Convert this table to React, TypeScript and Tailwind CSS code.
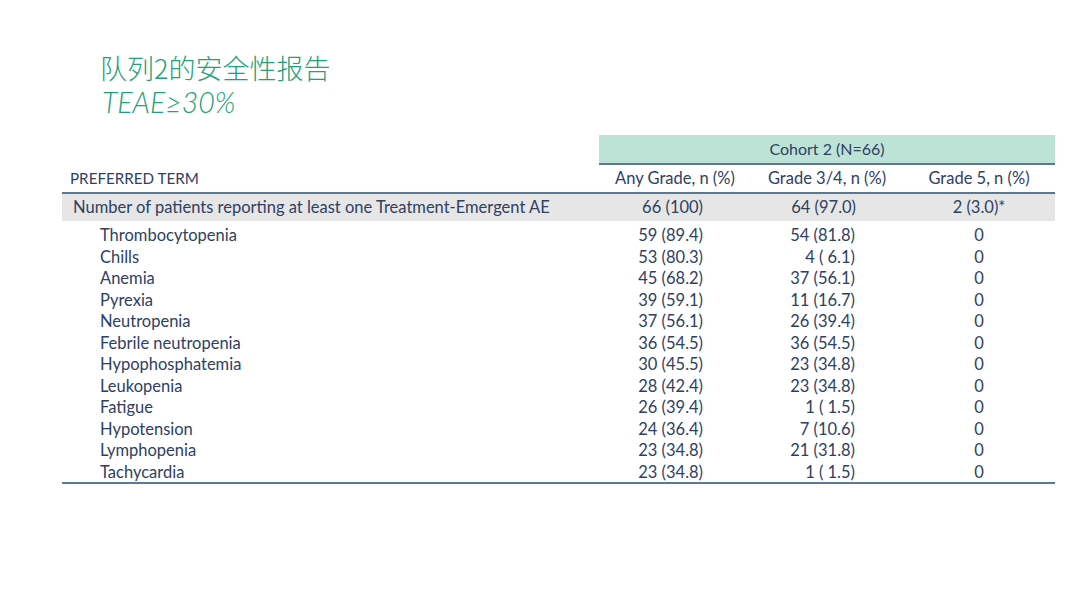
const rows: Array<[string, string, string, string]> = [
  ["Thrombocytopenia", "59 (89.4)", "54 (81.8)", "0"],
  ["Chills", "53 (80.3)", "4 ( 6.1)", "0"],
  ["Anemia", "45 (68.2)", "37 (56.1)", "0"],
  ["Pyrexia", "39 (59.1)", "11 (16.7)", "0"],
  ["Neutropenia", "37 (56.1)", "26 (39.4)", "0"],
  ["Febrile neutropenia", "36 (54.5)", "36 (54.5)", "0"],
  ["Hypophosphatemia", "30 (45.5)", "23 (34.8)", "0"],
  ["Leukopenia", "28 (42.4)", "23 (34.8)", "0"],
  ["Fatigue", "26 (39.4)", "1 ( 1.5)", "0"],
  ["Hypotension", "24 (36.4)", "7 (10.6)", "0"],
  ["Lymphopenia", "23 (34.8)", "21 (31.8)", "0"],
  ["Tachycardia", "23 (34.8)", "1 ( 1.5)", "0"],
];

const cols = "grid grid-cols-[537px_152px_152px_152px]";

export default function App() {
  return (
    <div className="w-[1080px] h-[608px] bg-white overflow-hidden font-['Lato','Open_Sans',sans-serif] text-[#2f4062]">
      <div className="pl-[100px] pt-[54px] text-[#23a077] font-light leading-none">
        <div className="text-[27px] h-[34px] font-['Noto_Sans_CJK_SC',sans-serif]">队列2的安全性报告</div>
        <div className="text-[28.5px] h-[27px] italic pl-[2px] font-['Lato',sans-serif]">TEAE≥30%</div>
      </div>

      <div className="ml-[62px] mt-[20px] w-[993px] text-[16.5px]">
        <div className={cols}>
          <div />
          <div className="col-span-3 h-[30px] bg-[#bde3d7] border-b-2 border-[#5b7896] flex items-center justify-center text-[16px]">
            Cohort 2 (N=66)
          </div>
        </div>

        <div className={`${cols} h-[29px] items-center border-b-2 border-[#5b7896]`}>
          <div className="pl-[8px] text-[15.2px]">PREFERRED TERM</div>
          <div className="text-center">Any Grade, n (%)</div>
          <div className="text-center">Grade 3/4, n (%)</div>
          <div className="text-center">Grade 5, n (%)</div>
        </div>

        <div className={`${cols} h-[27px] items-center bg-[#e6e6e6]`}>
          <div className="pl-[11px]">Number of patients reporting at least one Treatment-Emergent AE</div>
          <div className="text-right pr-[48px]">66 (100)</div>
          <div className="text-right pr-[47px]">64 (97.0)</div>
          <div className="text-center">2 (3.0)*</div>
        </div>

        <div className="pt-[2px] border-b-2 border-[#5b7896]">
          {rows.map(([term, any, g34, g5]) => (
            <div key={term} className={`${cols} h-[21.55px] items-center`}>
              <div className="pl-[38px]">{term}</div>
              <div className="text-right pr-[48px] whitespace-pre">{any}</div>
              <div className="text-right pr-[48px] whitespace-pre">{g34}</div>
              <div className="text-center">{g5}</div>
            </div>
          ))}
        </div>
      </div>
    </div>
  );
}
